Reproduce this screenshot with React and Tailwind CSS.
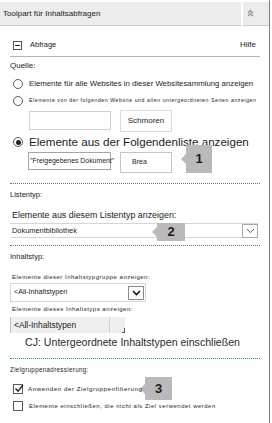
import React from 'react';

function Radio({ checked }) {
  return (
    <span className="relative flex h-[10px] w-[10px] shrink-0 items-center justify-center rounded-full border border-[#5a5a5a] bg-white">
      {checked && <span className="h-[5px] w-[5px] rounded-full bg-[#222]" />}
    </span>
  );
}

function Checkbox({ checked }) {
  return (
    <span className="relative flex h-[10px] w-[10px] shrink-0 items-center justify-center border border-[#5a5a5a] bg-white">
      {checked && (
        <svg width="10" height="9" viewBox="0 0 10 9" className="absolute -top-[1px] left-[0px]">
          <path d="M1.5 4.5 L4 7.2 L9 1" fill="none" stroke="#222" strokeWidth="1.3" />
        </svg>
      )}
    </span>
  );
}

function Callout({ n, className }) {
  // grey numbered marker with a small arrow on its left side
  return (
    <div className={`absolute flex items-center ${className}`}>
      <span className="h-0 w-0 border-y-[5px] border-r-[5px] border-y-transparent border-r-[#bcb9ba]" />
      <span className="flex h-full flex-1 items-center justify-center bg-[#bcb9ba] text-[13px] font-bold text-[#1b1b1b]">
        {n}
      </span>
    </div>
  );
}

function DropButton({ dark }) {
  return (
    <span
      className={`flex h-[14px] w-[16px] shrink-0 items-center justify-center border bg-white ${
        dark ? 'border-[#8a8a8a]' : 'border-[#a8a8a8]'
      }`}
    >
      <svg width="9" height="6" viewBox="0 0 9 6">
        <path
          d="M1 1 L4.5 4.6 L8 1"
          fill="none"
          stroke={dark ? '#111' : '#666'}
          strokeWidth={dark ? 1.5 : 1}
        />
      </svg>
    </span>
  );
}

function Dotted({ className = '' }) {
  return <div className={`mx-[10px] w-[250px] border-t border-dotted border-[#3f7bd4] ${className}`} />;
}

export default function App() {
  return (
    <div className="h-[423px] w-[272px] overflow-hidden bg-white font-['Liberation_Sans',Arial,sans-serif] text-[#1c1c1c]">
      <div className="relative flex h-full w-[270px] flex-col border-r border-[#7d7d7d] pt-[2px]">
        <Callout n="1" className="left-[181px] top-[145px] h-[28px] w-[31px]" />
        <Callout n="2" className="left-[152px] top-[223px] h-[18px] w-[33px]" />
        <Callout n="3" className="left-[140px] top-[377px] h-[23px] w-[32px]" />

        {/* Header */}
        <div className="flex h-[24px] shrink-0 gap-[2px]">
          <div className="flex w-[241px] items-center border-b border-[#c9c9c9] bg-[#ececec] pl-[3px] text-[8px] text-[#222]">
            Toolpart für Inhaltsabfragen
          </div>
          <div className="flex flex-1 border-b border-[#c9c9c9] bg-[#ececec] pl-[4px] pt-[7px]">
            <svg width="7" height="8" viewBox="0 0 7 8">
              <path d="M1 4 L3.5 1.5 L6 4 M1 7 L3.5 4.5 L6 7" fill="none" stroke="#8a8a8a" strokeWidth="1.1" />
            </svg>
          </div>
        </div>

        {/* Abfrage */}
        <div className="mt-[12px] flex h-[14px] shrink-0 items-center pl-[13px] pr-[13px]">
          <span className="flex h-[9px] w-[9px] items-center justify-center border border-[#555]">
            <span className="h-px w-[5px] bg-[#222]" />
          </span>
          <span className="ml-[8px] text-[7.5px]">Abfrage</span>
          <span className="ml-auto text-[8px]">Hilfe</span>
        </div>
        <div className="mx-[10px] mt-[4px] h-px w-[250px] shrink-0 bg-[#b4b4b4]" />

        {/* Quelle */}
        <div className="mt-[3px] flex h-[11px] shrink-0 items-center pl-[10px] text-[8px]">Quelle:</div>

        <div className="mt-[7px] flex h-[12px] shrink-0 items-center pl-[13px]">
          <Radio />
          <span className="ml-[6px] whitespace-nowrap text-[7.8px]">
            Elemente für alle Websites in dieser Websitesammlung anzeigen
          </span>
        </div>
        <div className="mt-[5px] flex h-[12px] shrink-0 items-center pl-[13px]">
          <Radio />
          <span className="ml-[6px] whitespace-nowrap text-[5.2px] tracking-[0.55px]">
            Elemente von der folgenden Website und allen untergeordneten Seiten anzeigen
          </span>
        </div>
        <div className="mt-[3px] flex h-[22px] shrink-0 items-start pl-[29px]">
          <span className="mt-[1px] h-[19px] w-[82px] border border-[#cfcfcf]" />
          <span className="ml-[9px] flex h-[22px] w-[52px] items-center justify-center border border-[#dcdcdc] text-[8px]">
            Schmoren
          </span>
        </div>

        <div className="mt-[3px] flex h-[14px] shrink-0 items-center pl-[13px]">
          <Radio checked />
          <span className="ml-[6px] whitespace-nowrap text-[11.6px] leading-none">
            Elemente aus der Folgendenliste anzeigen
          </span>
        </div>
        <div className="mt-[3px] flex h-[21px] shrink-0 items-start pl-[28px]">
          <span className="flex h-[18px] w-[83px] items-center overflow-visible whitespace-nowrap border border-[#a5a5a5] pl-[1px] text-[6.9px]">
            "Freigegebenes Dokument"
          </span>
          <span className="ml-[9px] flex h-[21px] w-[52px] items-center border border-[#c4c4c4] pl-[11px] text-[7px]">
            Brea
          </span>
        </div>

        <Dotted className="mt-[10px] shrink-0" />

        {/* Listentyp */}
        <div className="mt-[6px] flex h-[10px] shrink-0 items-center pl-[10px] text-[7.5px]">Listentyp:</div>
        <div className="mt-[10px] flex h-[12px] shrink-0 items-center pl-[12px]">
          <span className="relative whitespace-nowrap text-[8.9px]">Elemente aus diesem Listentyp anzeigen:</span>
        </div>
        <div className="mx-[10px] mt-[1px] flex h-[15px] w-[248px] shrink-0 items-center border-y border-[#d6d6d6] pl-[2px]">
          <span className="text-[7.4px]">Dokumentbibliothek</span>
          <span className="ml-auto">
            <DropButton />
          </span>
        </div>

        <Dotted className="mt-[7px] shrink-0" />

        {/* Inhaltstyp */}
        <div className="mt-[6px] flex h-[10px] shrink-0 items-center pl-[10px] text-[7.5px]">Inhaltstyp:</div>
        <div className="mt-[10px] flex h-[10px] shrink-0 items-center pl-[12px] whitespace-nowrap text-[6px] tracking-[0.5px]">
          Elemente dieser Inhaltstypgruppe anzeigen:
        </div>
        <div className="mx-[10px] mt-[1px] flex h-[19px] w-[136px] shrink-0 items-center border border-[#d6d6d6] pl-[3px] pr-[1px]">
          <span className="text-[7.2px]">&lt;All-Inhaltstypen</span>
          <span className="ml-auto">
            <DropButton dark />
          </span>
        </div>
        <div className="mt-[2px] flex h-[10px] shrink-0 items-center pl-[12px] whitespace-nowrap text-[6px] tracking-[0.5px]">
          Elemente dieses Inhaltstyps anzeigen:
        </div>
        <div className="mx-[10px] mt-[3px] flex h-[16px] w-[115px] shrink-0 items-center border-l border-[#bdbdbd] bg-[#efefef] pl-[3px]">
          <span className="text-[8.4px]">&lt;All-Inhaltstypen</span>
          <span className="ml-auto h-full w-px bg-[#d0d0d0]" />
          <span className="ml-[12px] mt-auto h-[5px] w-[3px] border-b border-r border-[#555]" />
        </div>
        <div className="mt-[3px] flex h-[14px] shrink-0 items-center pl-[25px] whitespace-nowrap text-[10.6px] text-[#2a2a2a]">
          CJ: Untergeordnete Inhaltstypen einschließen
        </div>

        <Dotted className="mt-[8px] shrink-0" />

        {/* Zielgruppen */}
        <div className="mt-[6px] flex h-[10px] shrink-0 items-center pl-[10px] whitespace-nowrap text-[6.3px] tracking-[0.3px]">
          Zielgruppenadressierung:
        </div>
        <div className="mt-[8px] flex h-[12px] shrink-0 items-center pl-[13px]">
          <Checkbox checked />
          <span className="relative ml-[5px] whitespace-nowrap text-[6.2px] tracking-[0.55px]">
            Anwenden der Zielgruppenfilterung
          </span>
        </div>
        <div className="mt-[5px] flex h-[12px] shrink-0 items-center pl-[13px]">
          <Checkbox />
          <span className="ml-[6px] whitespace-nowrap text-[5.9px] tracking-[0.55px]">
            Elemente einschließen, die nicht als Ziel verwendet werden
          </span>
        </div>
      </div>
    </div>
  );
}
